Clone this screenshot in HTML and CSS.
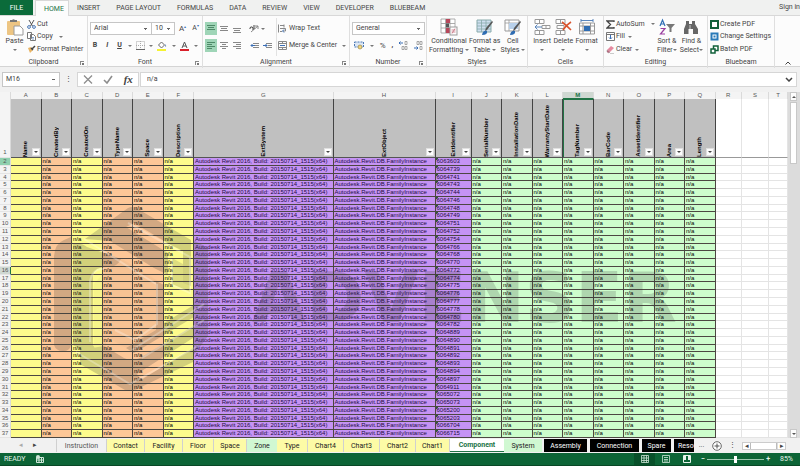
FILE: index.html
```html
<!DOCTYPE html>
<html lang="en">
<head>
<meta charset="utf-8">
<title>Component sheet</title>
<meta name="viewport" content="width=device-width, initial-scale=1">
<link rel="stylesheet" href="styles.css">
</head>
<body>
<nav class="menu">
  <button class="file">FILE</button>
  <button class="active">HOME</button>
  <button>INSERT</button>
  <button>PAGE LAYOUT</button>
  <button>FORMULAS</button>
  <button>DATA</button>
  <button>REVIEW</button>
  <button>VIEW</button>
  <button>DEVELOPER</button>
  <button>BLUEBEAM</button>
  <a class="signin" href="#">Sign in</a>
</nav>

<section class="ribbon">
  <div class="group">
    <div class="body clipboard">
      <button class="big">
        <svg width="18" height="18" viewBox="0 0 18 18"><rect x="1" y="3" width="13" height="14" rx="1" fill="#edc583"/><path d="M4 4V2h2a2 2 0 0 1 3 0h2v2z" fill="#777"/><path d="M8 8h6l3 3v6H8z" fill="#fff" stroke="#9a9a9a"/></svg>
        <span>Paste</span><i class="caret"></i>
      </button>
      <div class="stack">
        <button><svg width="9" height="9" viewBox="0 0 9 9"><path d="M2 0l3.500 6M7 0L3.500 6" stroke="#555" fill="none"/><circle cx="2" cy="7" r="1.400" fill="none" stroke="#4b78b5"/><circle cx="7" cy="7" r="1.400" fill="none" stroke="#4b78b5"/></svg>Cut</button>
        <button><svg width="9" height="9" viewBox="0 0 9 9"><path d="M.5.5h4v6h-4zM3.500 2.500h3l2 2v4h-5z" fill="#fff" stroke="#777"/><path d="M5 5.500h2M5 7h2" stroke="#4b78b5" stroke-width=".7"/></svg>Copy <i class="caret far"></i></button>
        <button><svg width="9" height="9" viewBox="0 0 9 9"><path d="M1 3l3-1 2 3-3 3z" fill="#e9b565"/><path d="M4 3l2 2M5 4l3-3" stroke="#444" stroke-width="1.500"/></svg>Format Painter</button>
      </div>
    </div>
    <div class="label">Clipboard<i class="launch"></i></div>
  </div>

  <div class="group">
    <div class="body lines">
      <div class="line">
        <select class="face" aria-label="Font"><option>Arial</option></select><select class="size" aria-label="Font size"><option>10</option></select>
        <button class="grow">A<sup>▴</sup></button><button class="shrink">A<sup>▾</sup></button>
      </div>
      <div class="line fmt">
        <button class="ch"><b>B</b></button><button class="ch"><b><em>I</em></b></button><button class="ch"><b><u>U</u></b></button><i class="caret"></i>
        <button><svg width="9" height="9" viewBox="0 0 9 9"><path d="M.5.5h8v8h-8zM4.500 0v9M0 4.500h9" fill="none" stroke="#aaa" stroke-dasharray="1 1"/><path d="M0 8.500h9" stroke="#666"/></svg></button><i class="caret"></i>
        <button><svg width="10" height="10" viewBox="0 0 10 10"><path d="M1.500 4l3-3 3 3-3 3z" fill="#fff" stroke="#666"/><path d="M8 3q2 2 .5 3z" fill="#4b78b5"/><rect y="8" width="9" height="2" fill="#f5f332"/></svg></button><i class="caret"></i>
        <button><svg width="10" height="10" viewBox="0 0 10 10"><path d="M2 7l2.500-6L7 7M3 5h3" fill="none" stroke="#555"/><rect y="8" width="9" height="2" fill="#d9202a"/></svg></button><i class="caret"></i>
      </div>
    </div>
    <div class="label">Font<i class="launch"></i></div>
  </div>

  <div class="group">
    <div class="body align">
      <div class="lines">
        <div class="line">
          <button class="on" aria-label="Top"><svg width="8" height="8" viewBox="0 0 8 8"><path d="M0 .5h8M1 2.500h6M0 4.500h8"/></svg></button>
          <button aria-label="Middle"><svg width="8" height="8" viewBox="0 0 8 8"><path d="M0 1.500h8M1 3.500h6M0 5.500h8"/></svg></button>
          <button aria-label="Bottom"><svg width="8" height="8" viewBox="0 0 8 8"><path d="M0 3.500h8M1 5.500h6M0 7.500h8"/></svg></button>
          <button aria-label="Orientation" class="orient"><svg width="10" height="9" viewBox="0 0 10 9"><path d="M2 8l7-6M9 2v3M9 2H6"/><path d="M1 5a1.500 1.500 0 1 1 3-1v2M5 1v4" stroke="#444"/></svg></button><i class="caret"></i>
        </div>
        <div class="line">
          <button class="on" aria-label="Left"><svg width="8" height="8" viewBox="0 0 8 8"><path d="M0 .5h8M0 2.500h5M0 4.500h8M0 6.500h5"/></svg></button>
          <button aria-label="Center"><svg width="8" height="8" viewBox="0 0 8 8"><path d="M0 .5h8M2 2.500h4M0 4.500h8M2 6.500h4"/></svg></button>
          <button aria-label="Right"><svg width="8" height="8" viewBox="0 0 8 8"><path d="M0 .5h8M3 2.500h5M0 4.500h8M3 6.500h5"/></svg></button>
          <button aria-label="Decrease indent" class="orient"><svg width="9" height="8" viewBox="0 0 9 8"><path d="M3 1.500h6M5 3.500h4M3 5.500h6"/><path d="M5 3.500H1M2.500 2L1 3.500 2.500 5" stroke="#3a6eb5"/></svg></button>
          <button aria-label="Increase indent"><svg width="9" height="8" viewBox="0 0 9 8"><path d="M3 1.500h6M5 3.500h4M3 5.500h6"/><path d="M0 3.500h4M2.500 2L4 3.500 2.500 5" stroke="#3a6eb5"/></svg></button>
        </div>
      </div>
      <div class="lines wide">
        <button><svg width="9" height="9" viewBox="0 0 9 9"><path d="M.5.5v8M2 1.500h4M2 4.500h5.500v2.500H5M2 7.500h2M6 .5v3"/><path d="M6 5.500L4.500 7 6 8.500" stroke="#3a6eb5"/></svg>Wrap Text</button>
        <button><svg width="9" height="9" viewBox="0 0 9 9"><path d="M.5.5h8v8h-8zM.5 2.500h8M.5 6.500h8M4.500 0v2M4.500 7v2"/><path d="M2 4.500h5" stroke="#3a6eb5"/></svg>Merge &amp; Center <i class="caret"></i></button>
      </div>
    </div>
    <div class="label">Alignment<i class="launch"></i></div>
  </div>

  <div class="group">
    <div class="body lines">
      <div class="line"><select class="numfmt" aria-label="Number format"><option>General</option></select></div>
      <div class="line num">
        <button aria-label="Currency"><svg width="10" height="9" viewBox="0 0 10 9"><rect x=".5" y="1" width="9" height="5" fill="#dbe6f4" stroke="#4b78b5" stroke-dasharray="2 1"/><circle cx="6" cy="6" r="2" fill="#f2d478" stroke="#8a7a40" stroke-width=".6"/></svg></button><i class="caret"></i>
        <button class="pct">%</button><button><b>,</b></button>
        <button aria-label="Increase decimal"><svg width="9" height="9" viewBox="0 0 9 9"><path d="M6 .5h2v3H6zM3 5.500h2v3H3zM6 5.500h2v3H6z" stroke="#888" fill="none" stroke-width=".7"/><path d="M4 2H0M1.500.5L0 2l1.500 1.500" stroke="#3a6eb5" fill="none"/></svg></button>
        <button aria-label="Decrease decimal"><svg width="9" height="9" viewBox="0 0 9 9"><path d="M3 .5h2v3H3zM6 .5h2v3H6zM6 5.500h2v3H6z" stroke="#888" fill="none" stroke-width=".7"/><path d="M0 7h4M2.500 5.500L4 7 2.500 8.500" stroke="#3a6eb5" fill="none"/></svg></button>
      </div>
    </div>
    <div class="label">Number<i class="launch"></i></div>
  </div>

  <div class="group">
    <div class="body bigs styles">
      <button class="big"><svg width="18" height="18" viewBox="0 0 18 18"><path d="M1 1h14v14H1zM1 5.500h14M1 10h14M5.500 1v14M10 1v14" fill="#fff" stroke="#999" stroke-width=".8"/><path d="M6 1h4v4H6zM6 10h4v5H6z" fill="#b8475a"/><path d="M6 5.500h3v4H6z" fill="#555"/><rect x="10" y="9" width="7" height="8" fill="#fff" stroke="#999"/><path d="M11.500 12h4M11.500 14h4M15 10.500l-3 5" stroke="#c06070" stroke-width=".7"/></svg><span>Conditional<br>Formatting <i class="caret"></i></span></button>
      <button class="big"><svg width="18" height="18" viewBox="0 0 18 18"><path d="M1 2h14v12H1z" fill="#cfdff0" stroke="#8aa"/><path d="M1 5h14M1 8h14M1 11h14M5.500 2v12M10 2v12" stroke="#8aa" stroke-width=".8"/><path d="M17 4l-6 8-2 1 1-3 6-7z" fill="#555"/><path d="M6 17q1-5 5-4 1 4-5 4" fill="#2f6db3"/></svg><span>Format as<br>Table <i class="caret"></i></span></button>
      <button class="big"><svg width="18" height="18" viewBox="0 0 18 18"><path d="M1 2h14v11H1z" fill="#fff" stroke="#999"/><path d="M1 5h14M5 2v11" stroke="#999" stroke-width=".8"/><path d="M5 5h9v6H5z" fill="#b8d0ea"/><path d="M17 4l-6 8-2 1 1-3 6-7z" fill="#555"/><path d="M6 17q1-5 5-4 1 4-5 4" fill="#2f6db3"/></svg><span>Cell<br>Styles <i class="caret"></i></span></button>
    </div>
    <div class="label">Styles</div>
  </div>

  <div class="group">
    <div class="body bigs cells">
      <button class="big"><svg width="18" height="18" viewBox="0 0 18 18"><path d="M2 1.500h9v4H2zM6.500 1.500v4M2 12.500h9v4H2zM6.500 12v4M9 7.500h8v3H9zM13 7.500v3" fill="#fff" stroke="#999"/><path d="M9 9H2M4.500 6.500L2 9l2.500 2.500" fill="none" stroke="#5a86bd"/></svg><span>Insert</span><i class="caret"></i></button>
      <button class="big"><svg width="18" height="18" viewBox="0 0 18 18"><path d="M2 1.500h9v4H2zM6.500 1.500v4M2 12.500h9v4H2zM6.500 12v4M3 7.500h7v3H3z" fill="#fff" stroke="#999"/><path d="M8 4q4 3 9 8M17 4q-5 3-8 8" fill="none" stroke="#d9532c" stroke-width="1.600"/></svg><span>Delete</span><i class="caret"></i></button>
      <button class="big"><svg width="18" height="18" viewBox="0 0 18 18"><path d="M1.500 5h15v11h-15zM1.500 8h15M1.500 13h15M5 5v11M12.500 5v11" fill="#fff" stroke="#999"/><rect x="6" y="8" width="6" height="5" fill="#2f6db3"/><path d="M3 2.500h12M3 1v3M15 1v3" stroke="#5a86bd" fill="none"/></svg><span>Format</span><i class="caret"></i></button>
    </div>
    <div class="label">Cells</div>
  </div>

  <div class="group">
    <div class="body editing">
      <div class="stack">
        <button><svg width="9" height="9" viewBox="0 0 9 9"><path d="M8 2V1H1l3.500 3.500L1 8h7V7" fill="none" stroke="#444" stroke-width="1.300"/></svg>AutoSum <i class="caret far"></i></button>
        <button><svg width="9" height="9" viewBox="0 0 9 9"><path d="M.5.5h8v8h-8zM.5 2.500h8" fill="#fff" stroke="#777"/><path d="M4.500 3v4M3 5.500L4.500 7 6 5.500" fill="none" stroke="#3a6eb5"/></svg>Fill <i class="caret"></i></button>
        <button><svg width="9" height="9" viewBox="0 0 9 9"><path d="M1 5l4-4 3 2-4 4z" fill="#e58aa0"/><path d="M1 5l3 2-1 1-2-1zM4 8.500h4" fill="#c05070" stroke="#999" stroke-width=".5"/></svg>Clear <i class="caret"></i></button>
      </div>
      <div class="pair">
        <button class="big"><svg width="18" height="18" viewBox="0 0 18 18"><path d="M2 8l2.500-6L7 8M3 6h3" fill="none" stroke="#2f6db3" stroke-width="1.200"/><path d="M2.500 10.500H7L2.500 16H7" fill="none" stroke="#9a3fa0" stroke-width="1.200"/><path d="M8 6h9l-3.500 4v4h-2v-4z" fill="#777"/></svg><span>Sort &amp;<br>Filter<i class="caret"></i></span></button>
        <button class="big"><svg width="18" height="18" viewBox="0 0 18 18"><path d="M4 3h3v3h3V3h3v3l3 5v5h-5v-5H6.500v5H2v-5l2-5z" fill="#666"/><path d="M8 7v4" stroke="#ccc"/></svg><span>Find &amp;<br>Select<i class="caret"></i></span></button>
      </div>
    </div>
    <div class="label">Editing</div>
  </div>

  <div class="group">
    <div class="body">
      <div class="stack">
        <button><svg width="9" height="9" viewBox="0 0 9 9"><rect x="1" y="1" width="7" height="7" fill="#fff" stroke="#11603a" stroke-width="2"/></svg>Create PDF</button>
        <button><svg width="9" height="9" viewBox="0 0 9 9"><rect x=".5" y=".5" width="8" height="8" fill="#2a7ab8"/><rect x="3" y="3" width="3" height="3" fill="none" stroke="#fff"/></svg>Change Settings</button>
        <button><svg width="9" height="9" viewBox="0 0 9 9"><rect x="3.500" y="1" width="4.500" height="4.500" fill="#fff" stroke="#11603a" stroke-width="1.500"/><rect x="1" y="4" width="4" height="4" fill="#fff" stroke="#11603a" stroke-width="1.500"/></svg>Batch PDF</button>
      </div>
    </div>
    <div class="label">Bluebeam</div>
  </div>
  <button class="collapse" aria-label="Collapse ribbon"><svg width="6" height="4" viewBox="0 0 6 4"><path d="M.5 3.500L3 1l2.500 2.500" fill="none" stroke="#444"/></svg></button>
</section>

<section class="formula">
  <select class="namebox" aria-label="Name box"><option>M16</option></select>
  <span class="dots">⋮</span>
  <div class="fxbuttons">
    <button aria-label="Cancel"><svg width="10" height="9" viewBox="0 0 10 9"><path d="M1 .5l8 8M9 .5l-8 8" stroke="#8d8d8d" stroke-width="1.300"/></svg></button>
    <button aria-label="Enter"><svg width="10" height="9" viewBox="0 0 10 9"><path d="M1 5l3 3 5-7" fill="none" stroke="#8d8d8d" stroke-width="1.600"/></svg></button>
    <button class="fx">fx</button>
  </div>
  <input aria-label="Formula" value="n/a">
  <button class="expand" aria-label="Expand"><svg width="8" height="5" viewBox="0 0 8 5"><path d="M1 1l3 3 3-3" fill="none" stroke="#444" stroke-width="1.500"/></svg></button>
</section>

<main class="sheet">
  <div class="pane">
    <table>
      <thead></thead>
      <tbody></tbody>
    </table>
    <svg class="watermark" viewBox="0 0 788 346" preserveAspectRatio="none" aria-hidden="true">
      <g fill="#3c3c3c" opacity=".22">
        <path d="M54 166q0-14 10-18l7-3v108q-1 6-8 6t-9-6z"/>
        <path d="M85 147l43-31q4-2 8 0l55 32v46l-8-3v-32l-12-6-37-22-8 4 42 26v22l-14-7-44-27z"/>
        <path d="M73 152q8-2 14 3l34 12q-4 8-12 8-14-1-16 8v70l10 18-30-18z"/>
        <path d="M108 176l14-9 36 22v52l-24 14q-6 2-12-1l-16-10v28l-12-6v-74z" opacity=".15"/>
        <path d="M104 254l20 12q8 4 16 0l53-32v12l-56 36 4 6 52-32v14l-58 28q-6 2-10 0l-45-26v-14z"/>
        <path d="M172 166l18 10v24l-18-8z" opacity=".7"/>
        <path d="M193 148l15 8v88l-15 20zM156 189l8 4v38l30-18v12l-60 36-8-5 30-18z"/>
      </g>
      <g fill="none" stroke="#fff" stroke-width="2" opacity=".28">
        <path d="M84 147l72 45M128 131l62 34v36l-18-8v-26M90 250v-60q2-14 14-13M157 192v40l-22 16-20-10M204 212l-72 46M204 228l-62 38M76 260l54 32 68-38"/>
      </g>
      <text x="252" y="230">ADVENSER</text>
    </svg>
  </div>
  <div class="vscroll"><button class="up" aria-label="Scroll up"></button><i class="thumb"></i><button class="down" aria-label="Scroll down"></button></div>
</main>

<nav class="tabs">
  <div class="arrows"><button class="dim">◂</button><button>▸</button></div>
  <button>Instruction</button>
  <button class="yellow">Contact</button>
  <button class="yellow">Facility</button>
  <button class="yellow">Floor</button>
  <button class="yellow">Space</button>
  <button class="green">Zone</button>
  <button class="yellow">Type</button>
  <button class="yellow">Chart4</button>
  <button class="yellow">Chart3</button>
  <button class="yellow">Chart2</button>
  <button class="yellow">Chart1</button>
  <button class="current">Component</button>
  <button class="green">System</button>
  <button class="black">Assembly</button>
  <button class="black">Connection</button>
  <button class="black">Spare</button>
  <button class="black cut">Resource</button>
  <span class="more">...</span>
  <button class="add" aria-label="New sheet"><svg width="10" height="10" viewBox="0 0 10 10"><circle cx="5" cy="5" r="4.300" fill="#fff" stroke="#666"/><path d="M5 2.500v5M2.500 5h5" stroke="#555"/></svg></button>
  <span class="more">⋮</span>
  <div class="hscroll"><button>◂</button><i></i><button>▸</button></div>
</nav>

<footer class="status">
  <span>READY</span>
  <svg width="8" height="8" viewBox="0 0 8 8"><path d="M.5 2.500h7v5h-7zM.5 5h7M3 2v6M5.500 2v6" fill="none" stroke="#cfe6d8"/><circle cx="2" cy="2" r="2" fill="#cfe6d8"/></svg>
  <div class="views">
    <button class="on" aria-label="Normal"><svg width="8" height="8" viewBox="0 0 8 8"><path d="M.5.5h7v7h-7zM.5 3h7M.5 5.500h7M3 .5v7M5.500.5v7" fill="none" stroke="#cfe6d8" stroke-width=".8"/></svg></button>
    <button aria-label="Page layout"><svg width="8" height="8" viewBox="0 0 8 8"><path d="M.5.5h7v7h-7zM2 2.500h4M2 4.500h4M2 6h4" fill="none" stroke="#cfe6d8" stroke-width=".8"/></svg></button>
    <button aria-label="Page break"><svg width="8" height="8" viewBox="0 0 8 8"><path d="M.5.5h7v7h-7z" fill="none" stroke="#e8f4ec"/><path d="M1 1h2v4H1zM5 1h2v4H5z" fill="#e8f4ec"/></svg></button>
  </div>
  <div class="zoom"><b>−</b><input type="range" min="10" max="160" value="85" aria-label="Zoom"><b>+</b></div>
  <span>85%</span>
</footer>
<script src="sheet.js"></script>
</body>
</html>
```
FILE: styles.css
```css
* { box-sizing: border-box; }
body {
  margin: 0;
  height: 100vh;
  display: flex;
  flex-direction: column;
  background: #f1f1f1;
  color: #444;
  font: 7px/9px Roboto, "Open Sans", sans-serif;
  overflow: hidden;
}
button, select, input { font: inherit; color: inherit; border: 0; background: none; padding: 0; margin: 0; min-width: 0; border-radius: 0; }
button { white-space: nowrap; }
select { appearance: none; border: 1px solid #c6c6c6; background: #fff; padding: 0 3px; }
svg { display: block; flex: none; }
.caret { display: inline-block; border: 2px solid transparent; border-top-color: #777; border-bottom: 0; width: 0; height: 0; vertical-align: middle; }

.menu { display: flex; height: 16px; flex: none; background: #f0f1f0; border-bottom: 1px solid #d8d8d8; }
.menu button { padding: 2px 8px 0; }
.menu .file { width: 33px; background: #0b6b3a; color: #fff; margin-right: 2px; }
.menu .active { width: 34px; margin: 0 0 -1px; background: #fcfcfc; border: 1px solid #d8d8d8; border-bottom: 0; color: #217346; }
.menu .signin { margin-left: auto; color: #444; text-decoration: none; line-height: 15px; }

.ribbon {
  display: grid; flex: none; height: 51px;
  grid-template-columns: 88fr 115fr 147fr 77fr 101fr 76fr 104fr 67fr 25fr;
  background: #fcfcfc; border-bottom: 1px solid #d4d4d4;
}
.group { display: flex; flex-direction: column; border-right: 1px solid #dfdfdf; min-width: 0; padding-top: 2px; }
.body { display: flex; height: 38px; }
.label { position: relative; text-align: center; line-height: 12px; }
.launch { position: absolute; right: 3px; bottom: 3px; width: 4px; height: 4px; border: solid #888; border-width: 1px 0 0 1px; }
.launch::after { content: ""; position: absolute; right: 0; bottom: 0; width: 2px; height: 2px; background: #777; }
.big { display: flex; flex-direction: column; align-items: center; gap: 1px; line-height: 9px; }
.big > .caret { margin-top: 2px; }
.stack { display: grid; grid-template-rows: repeat(3, 1fr); justify-items: start; padding-left: 2px; }
.stack button { display: flex; align-items: center; gap: 1px; }
.stack .caret { margin-left: 2px; }
.stack .far { margin-left: 5px; }
.clipboard .big { width: 25px; padding-left: 4px; }
.lines { display: grid; grid-template-rows: 1fr 1fr; align-items: center; padding: 2px; }
.line { display: flex; align-items: center; }
select.face { width: 62px; height: 13px; }
select.size { width: 24px; height: 13px; margin-left: -1px; }
.face, .size, .numfmt, .namebox {
  background: linear-gradient(#666, #666) right 4px center / 3px 1px no-repeat, linear-gradient(#666, #666) right 5px top 6px / 1px 1px no-repeat #fff;
}
.grow { margin-left: 4px; font-size: 8px; }
.shrink { margin-left: 6px; }
sup { font-size: 4px; line-height: 0; vertical-align: 3px; color: #3a6eb5; }
.fmt { justify-content: space-between; padding: 0 2px 0 1px; }
.ch { width: 8px; }
.align { justify-content: space-between; }
.align svg { fill: none; stroke: #888; }
.align .line { gap: 1px; }
.align .line button { display: grid; place-items: center; width: 12px; height: 13px; }
.align .line .orient { margin-left: 4px; }
.align .on { background: #9fd5b7; }
.align .on svg { stroke: #4e8a68; }
.align .wide { width: 73px; border-left: 1px solid #e2e2e2; padding: 2px 1px; }
.wide button { display: flex; align-items: center; gap: 2px; }
.wide .caret { margin-left: 3px; }
select.numfmt { width: 73px; height: 13px; }
.num { justify-content: space-between; padding: 0 2px; }
.pct { font-size: 8px; }
.bigs { justify-content: space-around; }
.styles { padding: 0 2px; }
.cells { padding: 0 4px; }
.editing { justify-content: space-between; padding-right: 4px; }
.pair { display: flex; gap: 3px; }
.collapse { align-self: end; justify-self: center; padding-bottom: 3px; }

.formula { display: flex; flex: none; height: 15px; margin: 5px 0 5px; padding: 0 3px 0 2px; }
.namebox { width: 58px; }
.dots { width: 17px; text-align: center; line-height: 15px; }
.fxbuttons { display: flex; justify-content: space-around; align-items: center; width: 62px; background: #fff; border: 1px solid #d6d6d6; }
.fx { font: italic bold 11px/11px "Liberation Serif", serif; }
.formula input { flex: 1; background: #fff; border: 1px solid #d6d6d6; border-right: 0; padding: 0 6px; margin-left: 1px; }
.expand { width: 12px; background: #fff; border: 1px solid #d6d6d6; border-left: 0; }

.sheet { display: flex; flex: 1; min-height: 0; }
.pane { position: relative; flex: 1; display: flex; min-width: 0; }
table { flex: 1; display: flex; flex-direction: column; font: 6px/7px "Liberation Sans", Arial, sans-serif; color: #000; min-width: 0; }
thead { display: block; flex: none; }
tbody { flex: 1; display: grid; grid-template-rows: repeat(36, 1fr); min-height: 0; }
tr { display: grid; min-height: 0; grid-template-columns: 22fr repeat(6, 61fr) 279fr 204fr 72fr repeat(8, 61fr) 53fr 54fr 38fr; }
th, td { display: block; padding: 0; min-width: 0; min-height: 0; overflow: hidden; white-space: nowrap; }
th { font-weight: normal; }
.letters { height: 7px; background: #f4f4f4; color: #555; }
.letters th { border-right: 1px solid #dadada; text-align: center; }
.letters .picked { background: #cfd8d2; color: #217346; font-weight: bold; border-bottom: 1px solid #217346; }
.names { height: 59px; }
.names th { background: #fff; border-right: 1px solid #e4e4e4; border-bottom: 1px solid #999; }
.names th.head { position: relative; display: grid; place-items: end center; background: #c0c0c0; border-right: 1px solid #444; border-bottom-color: #555; }
.names span { writing-mode: vertical-rl; transform: rotate(180deg); font-weight: bold; color: #000; }
.filter { position: absolute; right: 1px; bottom: 1px; width: 8px; height: 8px; background: #fdfdfd; border: 1px solid #e0e0e0; }
.filter::after { content: ""; position: absolute; left: 1px; top: 2px; border: 2px solid transparent; border-top-color: #444; border-bottom: 0; }
.names th.picked { box-shadow: inset 1px 1px #217346; }
th.num1, tbody th { display: grid; place-items: end center; background: #f4f4f4; color: #555; border-right: 1px solid #dadada; border-bottom: 1px solid #e4e4e4; }
.names th.num1 { background: #f4f4f4; padding-bottom: 1px; }
tbody th.first { background: #8fd0ae; }
tbody th.picked { background: #cfd8d2; border-right-color: #217346; }
td { border-right: 1px solid #e4e4e4; border-bottom: 1px solid #e4e4e4; background: #fff; padding-left: 1px; }
td.y, td.o, td.p, td.g { border-color: #4c4742; }
td.y { background: #fdfb8c; }
td.o { background: #fdc797; }
td.p { background: #c593f4; color: #220c44; }
td.g { background: #cdfdcc; }
td.id { background: linear-gradient(135deg, #2c5a3c 2px, transparent 2px) #c593f4; }
.watermark { position: absolute; inset: 0; width: 100%; height: 100%; pointer-events: none; }
.watermark text { font: bold 70px "DejaVu Sans", sans-serif; fill: #303030; opacity: .19; }

.vscroll { width: 12px; display: flex; flex-direction: column; background: #dcdcdc; padding: 0 3px 0 2px; }
.vscroll button { height: 9px; background: #fdfdfd; border: 1px solid #c8c8c8; display: grid; place-items: center; }
.vscroll button::after { content: ""; border: 2px solid transparent; }
.vscroll .up::after { border-bottom-color: #555; border-top: 0; }
.vscroll .down::after { border-top-color: #555; border-bottom: 0; }
.thumb { height: 62px; margin-top: 1px; background: #fff; border: 1px solid #c8c8c8; }
.vscroll .down { margin-top: auto; }

.tabs {
  display: grid; flex: none; height: 15px; padding: 1px 0;
  grid-template-columns: 56fr 51fr 38fr 38fr 31fr 33fr 30fr 31fr 36fr 36fr 36fr 34fr 54fr 38fr 46fr 52fr 32fr 22fr 15fr 16fr 14fr 50fr 11fr;
}
.tabs > * { min-width: 0; }
.tabs > button { border-right: 1px solid #d0d0d0; overflow: hidden; color: #222; padding-top: 1px; }
.tabs > button:nth-child(2) { border-left: 1px solid #d0d0d0; color: #555; }
.tabs .yellow { background: #fdfba6; }
.tabs .green { background: #d0f8d2; border-right: 0; }
.tabs .current { background: #fff; color: #217346; font-weight: bold; border: 0; border-bottom: 1px solid #217346; }
.tabs .black { background: #000; color: #fff; border: 0; margin: 0 1px 0 2px; }
.tabs .cut { text-align: left; padding-left: 4px; margin-right: 0; }
.arrows { display: flex; justify-content: center; gap: 10px; }
.dim { color: #aaa; }
.more { text-align: center; line-height: 13px; }
.tabs .add { border: 0; display: grid; place-items: center; }
.hscroll { display: flex; height: 8px; margin: 3px 3px 0; background: #ddd; border: 1px solid #ccc; }
.hscroll button { width: 7px; background: #fff; line-height: 6px; }
.hscroll i { width: 27px; background: #fff; border: solid #bbb; border-width: 0 1px; }
.hscroll button:last-child { margin-left: auto; }

.status { display: flex; flex: none; align-items: center; height: 13px; gap: 10px; padding: 0 7px 0 4px; background: #0c6436; border-bottom: 1px solid #084725; color: #e8f4ec; }
.views { display: flex; margin-left: auto; }
.views button { width: 21px; height: 12px; display: grid; place-items: center; }
.views .on { background: #08502a; }
.zoom { display: flex; align-items: center; gap: 2px; margin-left: -6px; }
.zoom input { appearance: none; width: 57px; height: 9px; background: linear-gradient(#9cc7ae, #9cc7ae) center / 100% 1px no-repeat; }
.zoom input::-webkit-slider-thumb { appearance: none; width: 3px; height: 7px; background: #fff; }
```
FILE: sheet.js
```js
const names = ["Name", "CreatedBy", "CreatedOn", "TypeName", "Space", "Description", "ExtSystem", "ExtObject",
  "ExtIdentifier", "SerialNumber", "InstallationDate", "WarrantyStartDate", "TagNumber", "BarCode",
  "AssetIdentifier", "Area", "Length"];
const fills = [..."yoyooypppgggggggg"];
const ids = [6063603, 6064739, 6064741, 6064743, 6064744, 6064746, 6064748, 6064749, 6064751, 6064752, 6064754,
  6064766, 6064768, 6064770, 6064772, 6064774, 6064775, 6064776, 6064777, 6064778, 6064780, 6064782, 6064889,
  6064890, 6064891, 6064892, 6064893, 6064894, 6064897, 6064911, 6065072, 6065073, 6065200, 6065203, 6066704, 6066715];
const letters = [..."ABCDEFGHIJKLMNOPQRST"];

const letterRow = letters.map(l => `<th${l === "M" ? ' class="picked"' : ""}>${l}</th>`).join("");
const nameRow = letters.map((l, i) => names[i]
  ? `<th class="head${l === "M" ? " picked" : ""}"><span>${names[i]}</span><button class="filter" aria-label="Filter ${names[i]}"></button></th>`
  : "<th></th>").join("");
document.querySelector("thead").innerHTML =
  `<tr class="letters"><th></th>${letterRow}</tr><tr class="names"><th class="num1">1</th>${nameRow}</tr>`;

function cell(col, id) {
  if (col === 0 || col > 16) return "";
  if (col === 6) return "Autodesk Revit 2016, Build: 20150714_1515(x64)";
  if (col === 7) return "Autodesk.Revit.DB.FamilyInstance";
  if (col === 8) return id;
  return "n/a";
}

document.querySelector("tbody").innerHTML = ids.map((id, r) => {
  const row = r + 2;
  const mark = row === 2 ? ' class="first"' : row === 16 ? ' class="picked"' : "";
  const cells = letters.map((l, c) => `<td class="${fills[c] || ""}${c === 8 ? " id" : ""}">${cell(c, id)}</td>`).join("");
  return `<tr><th${mark}>${row}</th>${cells}</tr>`;
}).join("");
```
